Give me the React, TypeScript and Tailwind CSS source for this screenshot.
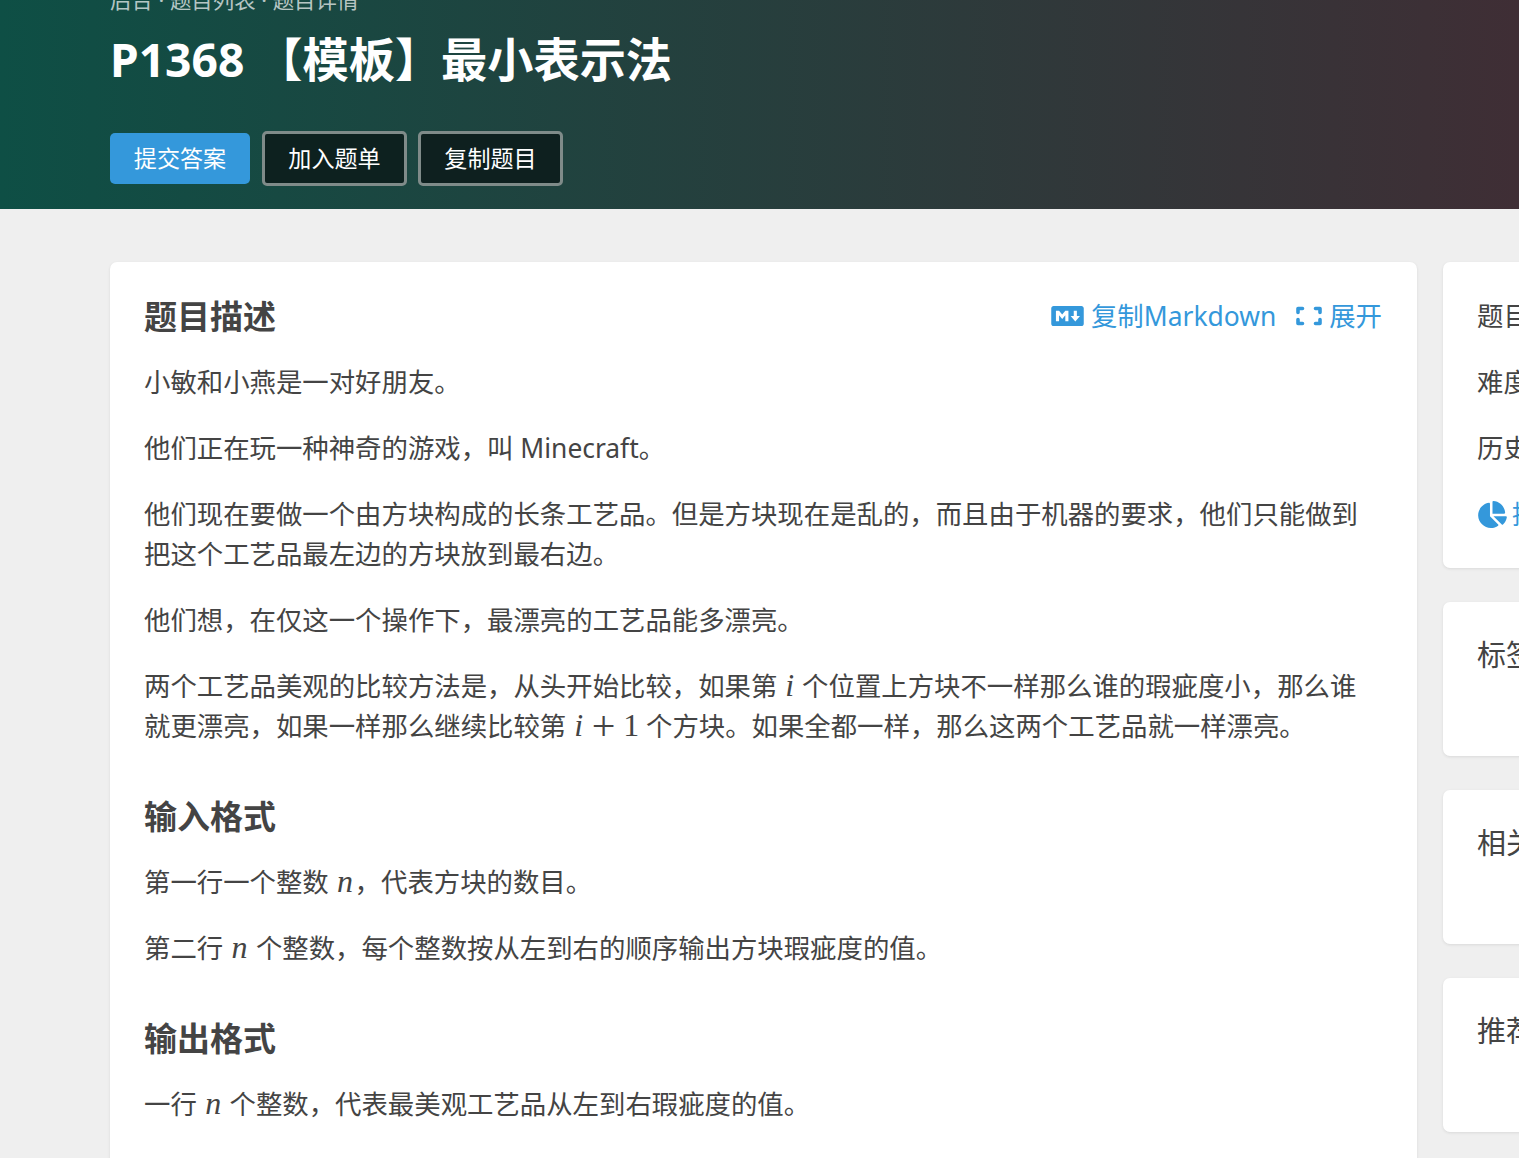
import { FaMarkdown, FaChartPie } from "react-icons/fa";

function M({ children, w }: { children: string; w: string }) {
  return <span className={`inline-block text-center font-['Liberation_Serif',serif] italic text-[32px] leading-[0px] ${w}`}>{children}</span>;
}

function Expand() {
  return (
    <svg viewBox="0 0 26 20" className="ml-[20px] w-[26px] h-[20px]" fill="none" stroke="currentColor" strokeWidth="3.6" strokeLinecap="round" strokeLinejoin="round">
      <path d="M2 6.5V2.5H6.5" />
      <path d="M19.5 2.5H24V6.5" />
      <path d="M2 13.5V17.5H6.5" />
      <path d="M19.5 17.5H24V13.5" />
    </svg>
  );
}

function Side({ className, children }: { className: string; children: React.ReactNode }) {
  return <div className={`bg-white rounded-[7px] shadow-[0_1px_3px_rgba(26,26,26,0.1)] px-[34px] ${className}`}>{children}</div>;
}

function Sep() {
  return <span className="inline-block w-[17px] text-center">·</span>;
}

export default function App() {
  return (
    <div className="w-[1519px] h-[1158px] overflow-hidden bg-[#efefef] text-[#444] font-['Noto_Sans','Noto_Sans_CJK_SC',sans-serif] text-[26.4px] leading-[40px]">
      <header className="h-[209px] overflow-hidden bg-[linear-gradient(90deg,#0e4f45,#3f2e35)] pl-[110px]">
        <div className="-mt-[10px] text-[21.45px] leading-[20px] text-white/70">后台<Sep />题目列表<Sep />题目详情</div>
        <h1 className="mt-[17px] text-[46.2px] leading-[66px] font-bold text-white">P1368 【模板】最小表示法</h1>
        <div className="mt-[38px] flex items-center gap-[11px] text-[23.1px] leading-[33px] text-white">
          <button className="h-[51px] w-[140px] mr-[1px] rounded-[5px] bg-[#3498db]">提交答案</button>
          <button className="h-[55px] w-[145px] rounded-[5px] border-[3px] border-[#7f8b89] bg-[#0d211f]">加入题单</button>
          <button className="h-[55px] w-[145px] rounded-[5px] border-[3px] border-[#7f8b89] bg-[#0e201f]">复制题目</button>
        </div>
      </header>
      <main className="flex items-start gap-[26px] pl-[110px] pt-[53px]">
        <section className="w-[1307px] shrink-0 bg-white rounded-[7px] shadow-[0_1px_3px_rgba(26,26,26,0.1)] px-[34px] pt-[34px] h-[1000px]">
          <div className="flex items-center justify-between h-[40px]">
            <h2 className="text-[33px] leading-[40px] pt-[2px] font-bold">题目描述</h2>
            <div className="flex items-center text-[#3498db] pr-[1px]">
              <FaMarkdown className="w-[33px] h-[26px]" />
              <span className="ml-[7px]">复制Markdown</span>
              <Expand />
              <span className="ml-[7px]">展开</span>
            </div>
          </div>
          <p className="mt-[26px]">小敏和小燕是一对好朋友。</p>
          <p className="mt-[26px]">他们正在玩一种神奇的游戏，叫 Minecraft。</p>
          <p className="mt-[26px]">他们现在要做一个由方块构成的长条工艺品。但是方块现在是乱的，而且由于机器的要求，他们只能做到把这个工艺品最左边的方块放到最右边。</p>
          <p className="mt-[26px]">他们想，在仅这一个操作下，最漂亮的工艺品能多漂亮。</p>
          <p className="mt-[26px] pr-[2px]">两个工艺品美观的比较方法是，从头开始比较，如果第 <M w="w-[11px]">i</M> 个位置上方块不一样那么谁的瑕疵度小，那么谁就更漂亮，如果一样那么继续比较第 <M w="w-[11px]">i</M><span className="inline-block w-[39px] text-center font-['Liberation_Serif',serif] text-[42px] leading-[0px] translate-y-[4px]">+</span><span className="inline-block w-[16px] text-center font-['Liberation_Serif',serif] text-[32px] leading-[0px]">1</span> 个方块。如果全都一样，那么这两个工艺品就一样漂亮。</p>
          <h2 className="mt-[49px] text-[33px] leading-[40px] pt-[2px] font-bold">输入格式</h2>
          <p className="mt-[25px]">第一行一个整数 <M w="w-[19px]">n</M>，代表方块的数目。</p>
          <p className="mt-[26px]">第二行 <M w="w-[19px]">n</M> 个整数，每个整数按从左到右的顺序输出方块瑕疵度的值。</p>
          <h2 className="mt-[49px] text-[33px] leading-[40px] pt-[2px] font-bold">输出格式</h2>
          <p className="mt-[25px]">一行 <M w="w-[19px]">n</M> 个整数，代表最美观工艺品从左到右瑕疵度的值。</p>
        </section>
        <aside className="w-[400px] shrink-0 flex flex-col gap-[34px]">
          <Side className="h-[306px] pt-[34px]">
            <div className="whitespace-nowrap">题目提供者</div>
            <div className="mt-[26px] whitespace-nowrap">难度</div>
            <div className="mt-[26px] whitespace-nowrap">历史分数</div>
            <div className="mt-[26px] flex items-center whitespace-nowrap text-[#3498db]">
              <FaChartPie className="ml-[1px] w-[29px] h-[27px] shrink-0" />
              <span className="ml-[5px]">提交记录</span>
            </div>
          </Side>
          <Side className="h-[154px] pt-[33px] text-[29px]"><div className="whitespace-nowrap">标签</div></Side>
          <Side className="h-[154px] pt-[33px] text-[29px]"><div className="whitespace-nowrap">相关讨论</div></Side>
          <Side className="h-[154px] pt-[33px] text-[29px]"><div className="whitespace-nowrap">推荐题目</div></Side>
        </aside>
      </main>
    </div>
  );
}
